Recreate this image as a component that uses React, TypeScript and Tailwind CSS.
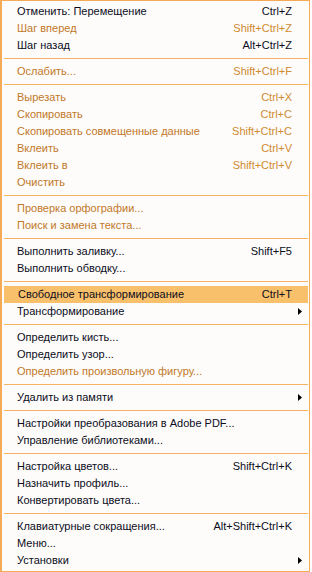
type Item = { label: string; shortcut?: string; disabled?: boolean; active?: boolean; sub?: boolean };
type Entry = Item | "sep";

const entries: Entry[] = [
  { label: "Отменить: Перемещение", shortcut: "Ctrl+Z" },
  { label: "Шаг вперед", shortcut: "Shift+Ctrl+Z", disabled: true },
  { label: "Шаг назад", shortcut: "Alt+Ctrl+Z" },
  "sep",
  { label: "Ослабить...", shortcut: "Shift+Ctrl+F", disabled: true },
  "sep",
  { label: "Вырезать", shortcut: "Ctrl+X", disabled: true },
  { label: "Скопировать", shortcut: "Ctrl+C", disabled: true },
  { label: "Скопировать совмещенные данные", shortcut: "Shift+Ctrl+C", disabled: true },
  { label: "Вклеить", shortcut: "Ctrl+V", disabled: true },
  { label: "Вклеить в", shortcut: "Shift+Ctrl+V", disabled: true },
  { label: "Очистить", disabled: true },
  "sep",
  { label: "Проверка орфографии...", disabled: true },
  { label: "Поиск и замена текста...", disabled: true },
  "sep",
  { label: "Выполнить заливку...", shortcut: "Shift+F5" },
  { label: "Выполнить обводку..." },
  "sep",
  { label: "Свободное трансформирование", shortcut: "Ctrl+T", active: true },
  { label: "Трансформирование", sub: true },
  "sep",
  { label: "Определить кисть..." },
  { label: "Определить узор..." },
  { label: "Определить произвольную фигуру...", disabled: true },
  "sep",
  { label: "Удалить из памяти", sub: true },
  "sep",
  { label: "Настройки преобразования в Adobe PDF..." },
  { label: "Управление библиотеками..." },
  "sep",
  { label: "Настройка цветов...", shortcut: "Shift+Ctrl+K" },
  { label: "Назначить профиль..." },
  { label: "Конвертировать цвета..." },
  "sep",
  { label: "Клавиатурные сокращения...", shortcut: "Alt+Shift+Ctrl+K" },
  { label: "Меню..." },
  { label: "Установки", sub: true },
];

function Arrow() {
  return (
    <svg width="4" height="7" viewBox="0 0 4 7" className="absolute right-[6px] top-[5px]">
      <path d="M0 0 L4 3.5 L0 7 Z" fill="#000" />
    </svg>
  );
}

export default function App() {
  return (
    <div className="w-[312px] h-[572px] bg-white">
      <div
        className="w-[310px] h-[572px] bg-[#fdfcfa] border border-[#f5ab55] border-l-2 pt-[2px] pb-[1px] px-px"
        style={{ fontFamily: '"Liberation Sans", Arial, sans-serif' }}
      >
        {entries.map((e, i) =>
          e === "sep" ? (
            <div key={i} className="h-[9px] flex items-center pl-[1px]">
              <div className="h-px w-full bg-[#f7b263]" />
            </div>
          ) : (
            <div
              key={i}
              className={`relative h-[17px] flex items-center pl-[14px] pr-[16px] text-[11px] leading-none ${
                e.active ? "bg-[#f9c06b] ml-[1px]" : ""
              } ${e.disabled ? "text-[#c27829]" : "text-[#0c0c1c]"}`}
            >
              <span className="flex-1 whitespace-nowrap">{e.label}</span>
              {e.shortcut && <span className={`whitespace-nowrap ${e.disabled ? "text-[#d08a30]" : ""}`}>{e.shortcut}</span>}
              {e.sub && <Arrow />}
            </div>
          )
        )}
      </div>
    </div>
  );
}
